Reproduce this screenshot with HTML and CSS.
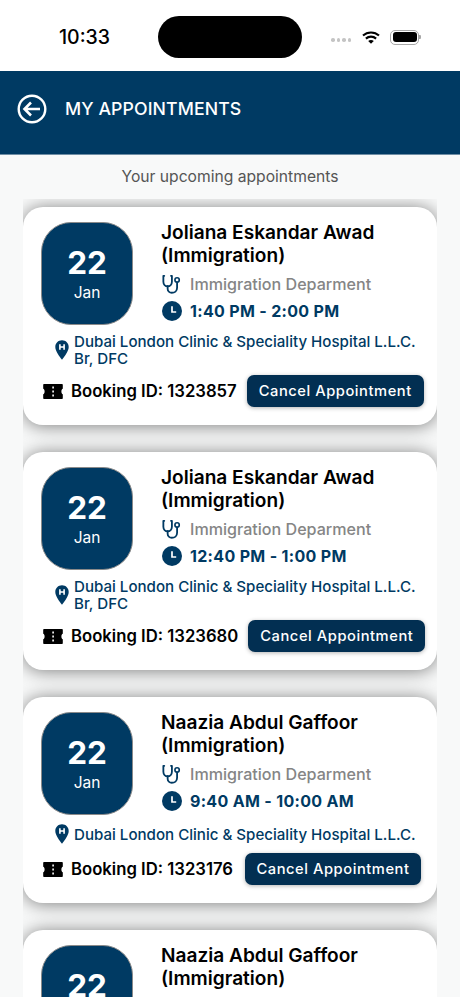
FILE: index.html
```html
<!DOCTYPE html>
<html lang="en">
<head>
<meta charset="utf-8">
<title>My Appointments</title>
<link rel="stylesheet" href="styles.css">
</head>
<body>
<svg class="defs" width="0" height="0" aria-hidden="true">
  <symbol id="steth" viewBox="0 0 22 22">
    <path d="M2.5 2H1.5V8.5C1.5 11.5 3.6 13.5 6.2 13.5C8.8 13.5 10.9 11.5 10.9 8.5V2H9.9" fill="none" stroke="currentColor" stroke-width="2" stroke-linecap="round" stroke-linejoin="round"/>
    <path d="M6.2 13.5V16.2C6.2 18.8 8.2 20.6 10.8 20.6C13.8 20.6 16.6 18.8 16.6 15V9.5" fill="none" stroke="currentColor" stroke-width="2" stroke-linecap="round"/>
    <circle cx="16.6" cy="6.5" r="2.4" fill="none" stroke="currentColor" stroke-width="1.8"/>
  </symbol>
  <symbol id="clock" viewBox="0 0 20 20">
    <circle cx="10" cy="10" r="10" fill="currentColor"/>
    <path d="M10 5.2V11H14.2" fill="none" stroke="#fff" stroke-width="1.7"/>
  </symbol>
  <symbol id="pin" viewBox="0 0 14 20">
    <path d="M7 0.2C3.2 0.2 0.3 3.1 0.3 6.9C0.3 11.2 4.6 16.4 7 19.8C9.4 16.4 13.7 11.2 13.7 6.9C13.7 3.1 10.8 0.2 7 0.2Z" fill="currentColor"/>
    <path d="M4.9 4.3V9.7M9.1 4.3V9.7M4.9 7H9.1" fill="none" stroke="#fff" stroke-width="1.6"/>
  </symbol>
  <symbol id="ticket" viewBox="0 0 20 16">
    <path fill-rule="evenodd" d="M1 0.5H19C19.5 0.5 19.8 0.9 19.8 1.3V5.2C18.9 5.5 18.4 6.6 18.4 8C18.4 9.4 18.9 10.5 19.8 10.8V14.7C19.8 15.1 19.5 15.5 19 15.5H1C0.5 15.5 0.2 15.1 0.2 14.7V10.8C1.1 10.5 1.6 9.4 1.6 8C1.6 6.6 1.1 5.5 0.2 5.2V1.3C0.2 0.9 0.5 0.5 1 0.5ZM9.3 3H10.9V5H9.3ZM9.3 7H10.9V9H9.3ZM9.3 11H10.9V13H9.3Z" fill="currentColor"/>
  </symbol>
</svg>
<div class="status">
  <span class="clock-text">10:33</span>
  <span class="island"></span>
  <span class="status-icons">
    <span class="signal"><i></i><i></i><i></i><i></i></span>
    <svg class="wifi" viewBox="0 0 18 13" width="18" height="13"><path d="M1 4.6C5.5 0.4 12.5 0.4 17 4.6M3.9 7.6C6.8 5 11.2 5 14.1 7.6" fill="none" stroke="#000" stroke-width="2.1"/><path d="M6.2 9.9C7.8 8.6 10.2 8.6 11.8 9.9L9 12.8Z" fill="#000"/></svg>
    <span class="battery"><span class="battery-fill"></span></span>
    <span class="battery-tip"></span>
  </span>
</div>
<header class="appbar">
  <svg class="back" viewBox="0 0 30 30" width="30" height="30"><circle cx="15" cy="15" r="13.3" fill="none" stroke="#fff" stroke-width="2.4"/><path d="M23 15H8M14 8.5L7.5 15L14 21.5" fill="none" stroke="#fff" stroke-width="2.6"/></svg>
  <h1 class="title">MY APPOINTMENTS</h1>
</header>
<p class="subtitle">Your upcoming appointments</p>
<main class="list">
  <article class="card">
    <div class="top">
      <div class="date"><span class="day">22</span><span class="month">Jan</span></div>
      <div class="info">
        <h2 class="name">Joliana Eskandar Awad (Immigration)</h2>
        <div class="line dept"><svg class="i-steth"><use href="#steth"/></svg>Immigration Deparment</div>
        <div class="line time"><svg class="i-clock"><use href="#clock"/></svg>1:40 PM - 2:00 PM</div>
      </div>
    </div>
    <div class="place"><svg class="i-pin"><use href="#pin"/></svg><span>Dubai London Clinic &amp; Speciality Hospital L.L.C. Br, DFC</span></div>
    <div class="booking"><svg class="i-ticket"><use href="#ticket"/></svg><span class="id">Booking ID: 1323857</span><button class="cancel">Cancel Appointment</button></div>
  </article>
  <article class="card">
    <div class="top">
      <div class="date"><span class="day">22</span><span class="month">Jan</span></div>
      <div class="info">
        <h2 class="name">Joliana Eskandar Awad (Immigration)</h2>
        <div class="line dept"><svg class="i-steth"><use href="#steth"/></svg>Immigration Deparment</div>
        <div class="line time"><svg class="i-clock"><use href="#clock"/></svg>12:40 PM - 1:00 PM</div>
      </div>
    </div>
    <div class="place"><svg class="i-pin"><use href="#pin"/></svg><span>Dubai London Clinic &amp; Speciality Hospital L.L.C. Br, DFC</span></div>
    <div class="booking"><svg class="i-ticket"><use href="#ticket"/></svg><span class="id">Booking ID: 1323680</span><button class="cancel">Cancel Appointment</button></div>
  </article>
  <article class="card">
    <div class="top">
      <div class="date"><span class="day">22</span><span class="month">Jan</span></div>
      <div class="info">
        <h2 class="name">Naazia Abdul Gaffoor (Immigration)</h2>
        <div class="line dept"><svg class="i-steth"><use href="#steth"/></svg>Immigration Deparment</div>
        <div class="line time"><svg class="i-clock"><use href="#clock"/></svg>9:40 AM - 10:00 AM</div>
      </div>
    </div>
    <div class="place"><svg class="i-pin"><use href="#pin"/></svg><span>Dubai London Clinic &amp; Speciality Hospital L.L.C.</span></div>
    <div class="booking"><svg class="i-ticket"><use href="#ticket"/></svg><span class="id">Booking ID: 1323176</span><button class="cancel cancel-far">Cancel Appointment</button></div>
  </article>
  <article class="card">
    <div class="top">
      <div class="date"><span class="day">22</span><span class="month">Jan</span></div>
      <div class="info">
        <h2 class="name">Naazia Abdul Gaffoor (Immigration)</h2>
      </div>
    </div>
  </article>
</main>
</body>
</html>
```
FILE: styles.css
```css
* { box-sizing: border-box; margin: 0; padding: 0; }
html, body { height: 997px; overflow: hidden; }
body { background: #f8f9f9; font-family: Inter, "Liberation Sans", sans-serif; color: #000; }
.defs { display: block; height: 0; }

.status { height: 71px; background: #fff; display: flex; align-items: center; position: relative; }
.clock-text { margin-left: 59px; margin-top: 3px; font-size: 19.5px; font-weight: 500; width: 99px; }
.island { width: 144px; height: 42px; border-radius: 21px; background: #000; margin-top: 3px; }
.status-icons { margin-left: 29px; margin-top: 3px; display: flex; align-items: center; }
.signal { display: flex; gap: 2px; width: 23px; margin-right: 8px; margin-top: 6px; }
.signal i { width: 3.5px; height: 3.5px; border-radius: 50%; background: #c4c4c4; }
.wifi { margin-right: 10px; }
.battery { width: 29px; height: 15px; border: 1.2px solid #a8a8a8; border-radius: 5px; padding: 1.5px; display: flex; }
.battery-fill { flex: 1; background: #000; border-radius: 3px; }
.battery-tip { width: 1.5px; height: 4px; background: #a8a8a8; border-radius: 0 1px 1px 0; }

.appbar { height: 84px; background: #003a63; display: flex; align-items: center; padding: 0 0 8px 17px; border-bottom: 1px solid #6f8ea5; }
.back { flex: none; }
.title { margin-left: 18px; color: #fff; font-size: 17.7px; font-weight: 500; letter-spacing: 0.1px; }

.subtitle { height: 44px; padding-top: 11px; text-align: center; font-size: 15.65px; line-height: 22px; color: #555; }

.list { margin: 0 23px; height: 798px; overflow: hidden; padding-top: 8px; display: flex; flex-direction: column; gap: 27px; }
.card { flex: none; background: #fff; border-radius: 20px; padding: 15px 13px 18px 18px; box-shadow: 0 1px 18px rgba(0,0,0,.5); }

.top { display: flex; }
.date { flex: none; width: 92px; height: 103px; border-radius: 30px; background: #003a63; border: 1px solid #8a8a8a; color: #fff; display: flex; flex-direction: column; align-items: center; padding-top: 21px; }
.day { font-size: 31.5px; font-weight: 700; line-height: 38px; }
.month { font-size: 15.5px; line-height: 22px; }
.info { margin-left: 28px; margin-top: -1px; min-width: 0; }
.name { font-size: 19.1px; font-weight: 600; line-height: 23px; max-width: 240px; }
.line { display: flex; align-items: center; }
.dept { margin-top: 6px; height: 22px; color: #858585; font-size: 16.1px; font-weight: 500; }
.time { margin-top: 5px; height: 22px; color: #003a63; font-size: 16px; font-weight: 700; letter-spacing: 0.32px; }
.i-steth { width: 20px; height: 20px; color: #003a63; margin-left: 1px; margin-right: 8px; flex: none; }
.i-clock { width: 20px; height: 20px; color: #003a63; margin-left: 1px; margin-right: 8px; flex: none; }

.place { display: flex; align-items: center; min-height: 22px; margin-top: 8px; color: #003a63; font-size: 15.1px; font-weight: 500; line-height: 17px; padding-left: 14px; }
.i-pin { width: 14px; height: 20px; color: #003a63; margin-right: 5px; flex: none; }

.booking { display: flex; align-items: center; margin-top: 8px; }
.i-ticket { width: 20px; height: 17px; margin-left: 2px; margin-right: 8px; flex: none; color: #000; }
.id { font-size: 16.7px; font-weight: 600; white-space: nowrap; }
.cancel { margin-left: 10px; width: 177px; height: 32px; flex: none; border: 0; border-radius: 7px; background: #022f52; color: #fff; font-family: inherit; font-size: 14.7px; font-weight: 500; letter-spacing: 0.55px; box-shadow: 0 1px 4px rgba(0,0,0,.3); }
.cancel-far { margin-left: 12px; width: 176px; }
```
